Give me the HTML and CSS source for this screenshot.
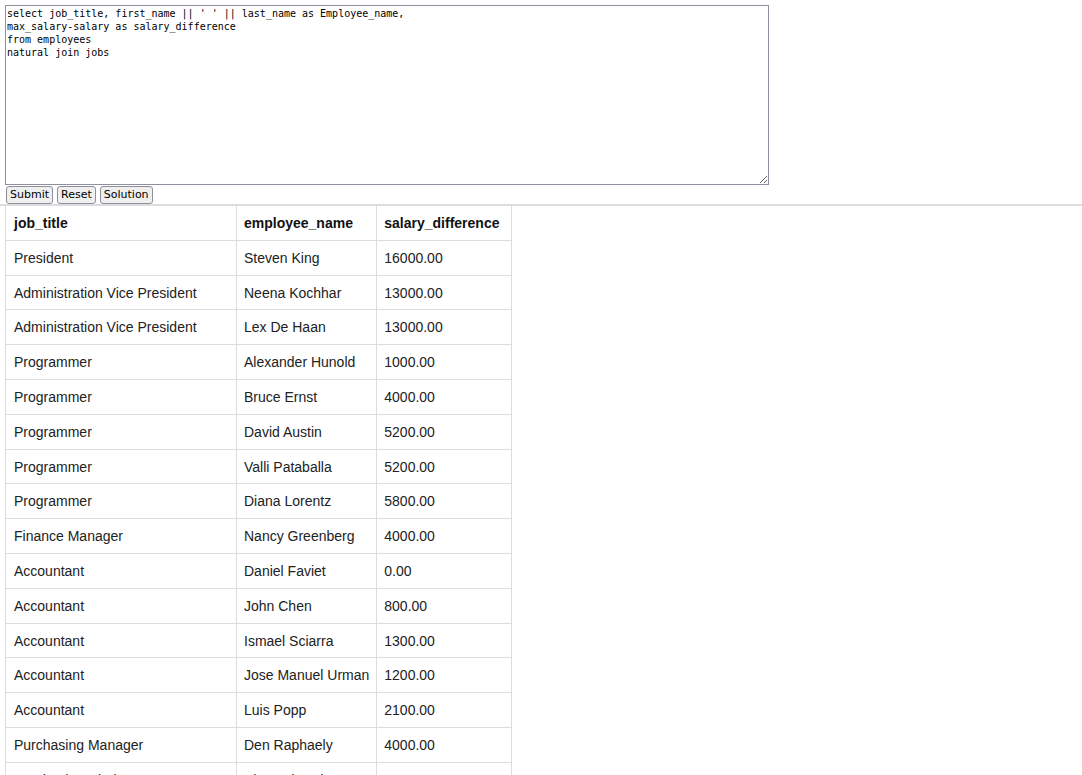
FILE: index.html
```html
<!DOCTYPE html>
<html>
<head>
<meta charset="utf-8">
<link rel="stylesheet" href="styles.css">
</head>
<body>
<form class="editor">
<textarea class="sql" spellcheck="false">select job_title, first_name || ' ' || last_name as Employee_name,
max_salary-salary as salary_difference
from employees
natural join jobs</textarea>
<div class="buttons"><button type="button" class="btn">Submit</button><button type="button" class="btn">Reset</button><button type="button" class="btn">Solution</button></div>
</form>
<div class="results">
<table class="grid">
<thead>
<tr><th class="c1">job_title</th><th class="c2">employee_name</th><th class="c3">salary_difference</th></tr>
</thead>
<tbody>
<tr><td>President</td><td>Steven King</td><td>16000.00</td></tr>
<tr><td>Administration Vice President</td><td>Neena Kochhar</td><td>13000.00</td></tr>
<tr><td>Administration Vice President</td><td>Lex De Haan</td><td>13000.00</td></tr>
<tr><td>Programmer</td><td>Alexander Hunold</td><td>1000.00</td></tr>
<tr><td>Programmer</td><td>Bruce Ernst</td><td>4000.00</td></tr>
<tr><td>Programmer</td><td>David Austin</td><td>5200.00</td></tr>
<tr><td>Programmer</td><td>Valli Pataballa</td><td>5200.00</td></tr>
<tr><td>Programmer</td><td>Diana Lorentz</td><td>5800.00</td></tr>
<tr><td>Finance Manager</td><td>Nancy Greenberg</td><td>4000.00</td></tr>
<tr><td>Accountant</td><td>Daniel Faviet</td><td>0.00</td></tr>
<tr><td>Accountant</td><td>John Chen</td><td>800.00</td></tr>
<tr><td>Accountant</td><td>Ismael Sciarra</td><td>1300.00</td></tr>
<tr><td>Accountant</td><td>Jose Manuel Urman</td><td>1200.00</td></tr>
<tr><td>Accountant</td><td>Luis Popp</td><td>2100.00</td></tr>
<tr><td>Purchasing Manager</td><td>Den Raphaely</td><td>4000.00</td></tr>
<tr><td>Purchasing Clerk</td><td>Alexander Khoo</td><td>2400.00</td></tr>
<tr><td>Purchasing Clerk</td><td>Shelli Baida</td><td>2600.00</td></tr>
<tr><td>Purchasing Clerk</td><td>Sigal Tobias</td><td>2700.00</td></tr>
<tr><td>Purchasing Clerk</td><td>Guy Himuro</td><td>2900.00</td></tr>
<tr><td>Purchasing Clerk</td><td>Karen Colmenares</td><td>3000.00</td></tr>
</tbody>
</table>
</div>
</body>
</html>
```
FILE: styles.css
```css
html, body {
  margin: 0;
  padding: 0;
  background: #fff;
}
.editor {
  padding: 5px 0 0 5px;
  margin: 0;
}
.sql {
  display: block;
  box-sizing: border-box;
  width: 764px;
  height: 180px;
  margin: 0;
  padding: 1px 1px;
  border: 1px solid #8f8f9d;
  font-family: "DejaVu Sans Mono", monospace;
  font-size: 10px;
  line-height: 13px;
  color: #000;
  resize: both;
  outline: none;
}
.buttons {
  display: flex;
  gap: 4px;
  padding: 1px 0 0 1px;
}
.btn {
  box-sizing: border-box;
  height: 18px;
  margin: 0;
  padding: 0 3px;
  font-family: "DejaVu Sans", sans-serif;
  font-size: 11px;
  line-height: 14px;
  color: #000;
  background: #efefef;
  border: 1px solid #8f8f9d;
  border-radius: 3px;
}
.results {
  border-top: 2px solid #ddd;
  padding-left: 5px;
}
.grid {
  border-collapse: collapse;
  border: 1px solid #ddd;
  border-top: none;
  font-family: "Liberation Sans", Arial, sans-serif;
  font-size: 14px;
  color: #222;
}
.grid th, .grid td {
  border: 1px solid #ddd;
  padding: 9px 7px 7px 7px;
  line-height: 17.8px;
  text-align: left;
  white-space: nowrap;
}
.grid th:first-child, .grid td:first-child {
  padding-left: 8px;
}
.grid th {
  font-weight: bold;
  color: #111;
}
.grid thead th {
  border-top: none;
}
.grid .c1 {
  width: 215px;
}
.grid .c3 {
  width: 120px;
}
```
